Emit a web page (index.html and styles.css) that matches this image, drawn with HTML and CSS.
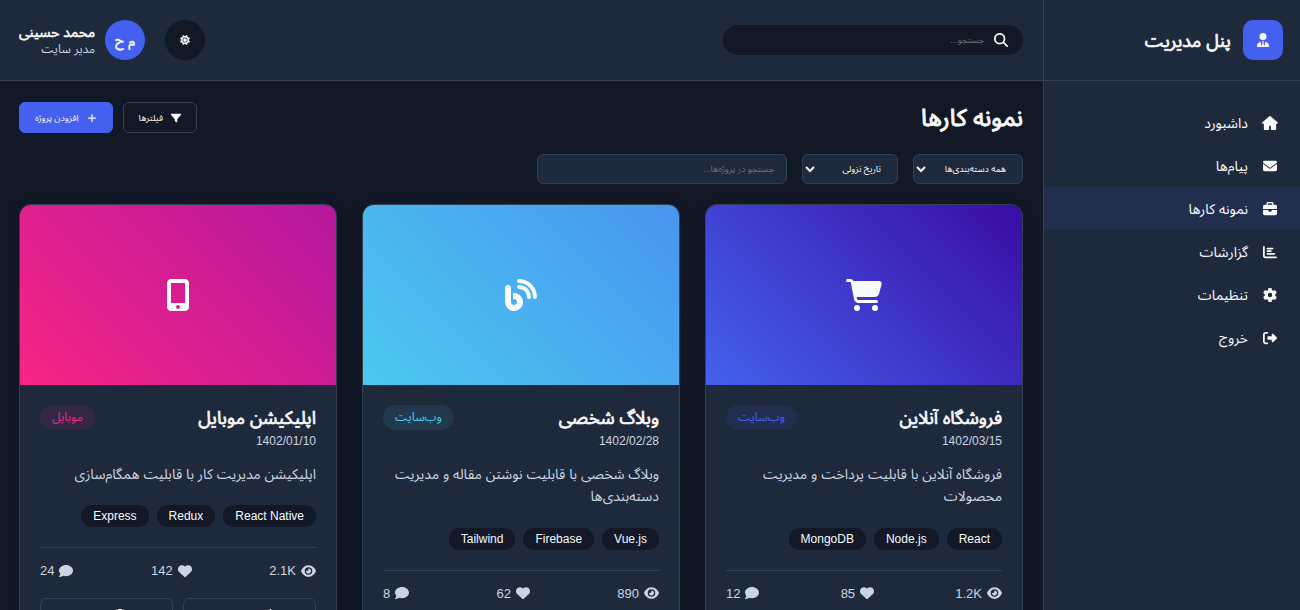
FILE: index.html
```
<!DOCTYPE html>
<html lang="fa" dir="rtl">
<head>
<meta charset="UTF-8">
<meta name="viewport" content="width=device-width, initial-scale=1">
<title>پنل مدیریت</title>
<link rel="stylesheet" href="styles.css">
</head>
<body>
<svg class="sprite" aria-hidden="true">
  <symbol id="i-tie" viewBox="0 0 448 512"><path d="M96 128a128 128 0 1 0 256 0A128 128 0 1 0 96 128zm94.500 200.200l18.600 31L175.800 483.100l-36-146.900c-2-8.100-9.800-13.400-17.900-11.300C51.900 342.400 0 405.800 0 481.300c0 17 13.800 30.700 30.700 30.700H417.300c17 0 30.700-13.800 30.700-30.700c0-75.500-51.900-138.900-121.900-156.400c-8.100-2-15.900 3.300-17.900 11.300l-36 146.900L238.900 359.200l18.600-31c6.400-10.700-1.300-24.200-13.700-24.200H204.300c-12.400 0-20.100 13.600-13.700 24.200z"/></symbol>
  <symbol id="i-home" viewBox="0 0 576 512"><path d="M575.800 255.500c0 18-15 32.100-32 32.100h-32l.7 160.200c0 2.700-.2 5.400-.5 8.100V472c0 22.100-17.900 40-40 40H360c-22.100 0-40-17.900-40-40V376c0-17.700-14.300-32-32-32s-32 14.300-32 32v96c0 22.100-17.900 40-40 40H104c-22.100 0-40-17.900-40-40V287.600H32c-18 0-32-14-32-32.100c0-9 3-17 10-24L266.400 8c7-7 15-8 22-8s15 2 21 7L564.800 231.500c8 7 12 15 11 24z"/></symbol>
  <symbol id="i-mail" viewBox="0 0 512 512"><path d="M48 64C21.500 64 0 85.500 0 112c0 15.100 7.100 29.300 19.200 38.400L236.800 313.600c11.400 8.500 27 8.500 38.400 0L492.800 150.400c12.100-9.100 19.200-23.300 19.200-38.400c0-26.500-21.500-48-48-48H48zM0 176V384c0 35.300 28.700 64 64 64H448c35.300 0 64-28.700 64-64V176L294.400 339.200c-22.800 17.100-54 17.100-76.800 0L0 176z"/></symbol>
  <symbol id="i-case" viewBox="0 0 512 512"><path d="M184 48H328c4.400 0 8 3.600 8 8V96H176V56c0-4.400 3.600-8 8-8zm-56 8V96H64C28.700 96 0 124.700 0 160v96H192 320 512V160c0-35.300-28.700-64-64-64H384V56c0-30.900-25.100-56-56-56H184c-30.900 0-56 25.100-56 56zM512 288H320v32c0 17.700-14.300 32-32 32H224c-17.700 0-32-14.300-32-32V288H0V416c0 35.300 28.700 64 64 64H448c35.300 0 64-28.700 64-64V288z"/></symbol>
  <symbol id="i-chart" viewBox="0 0 512 512"><path d="M32 32c17.700 0 32 14.300 32 32V400c0 8.800 7.200 16 16 16H480c17.700 0 32 14.300 32 32s-14.300 32-32 32H80c-44.200 0-80-35.800-80-80V64C0 46.300 14.300 32 32 32zm96 96c0-17.700 14.300-32 32-32l192 0c17.700 0 32 14.300 32 32s-14.300 32-32 32l-192 0c-17.700 0-32-14.300-32-32zm32 64H288c17.700 0 32 14.300 32 32s-14.300 32-32 32H160c-17.700 0-32-14.300-32-32s14.300-32 32-32zm0 96H416c17.700 0 32 14.300 32 32s-14.300 32-32 32H160c-17.700 0-32-14.300-32-32s14.300-32 32-32z"/></symbol>
  <symbol id="i-gear" viewBox="0 0 512 512"><path d="M495.900 166.600c3.200 8.700 .5 18.400-6.400 24.600l-43.300 39.400c1.100 8.300 1.700 16.800 1.700 25.400s-.6 17.100-1.700 25.400l43.300 39.400c6.900 6.200 9.600 15.900 6.400 24.600c-4.400 11.900-9.700 23.300-15.800 34.300l-4.700 8.100c-6.600 11-14 21.400-22.100 31.200c-5.900 7.200-15.700 9.600-24.500 6.800l-55.700-17.700c-13.400 10.300-28.200 18.900-44 25.400l-12.500 57.100c-2 9.100-9 16.300-18.200 17.800c-13.800 2.300-28 3.500-42.500 3.500s-28.700-1.200-42.500-3.500c-9.200-1.500-16.200-8.700-18.200-17.800l-12.500-57.100c-15.800-6.500-30.600-15.100-44-25.400L83.100 425.900c-8.800 2.800-18.600 .3-24.500-6.800c-8.100-9.800-15.500-20.200-22.100-31.200l-4.700-8.100c-6.100-11-11.400-22.400-15.800-34.300c-3.200-8.700-.5-18.400 6.400-24.600l43.300-39.400C64.600 273.100 64 264.600 64 256s.6-17.100 1.700-25.400L22.400 191.200c-6.900-6.200-9.600-15.900-6.400-24.600c4.400-11.900 9.700-23.300 15.800-34.300l4.700-8.100c6.600-11 14-21.400 22.100-31.200c5.900-7.200 15.700-9.600 24.500-6.800l55.700 17.700c13.400-10.300 28.200-18.900 44-25.400l12.500-57.100c2-9.100 9-16.300 18.200-17.800C227.300 1.200 241.500 0 256 0s28.700 1.200 42.500 3.500c9.200 1.500 16.200 8.700 18.200 17.800l12.500 57.100c15.800 6.500 30.600 15.100 44 25.400l55.700-17.700c8.800-2.800 18.600-.3 24.500 6.800c8.100 9.800 15.500 20.200 22.100 31.200l4.700 8.100c6.100 11 11.400 22.400 15.800 34.300zM256 336a80 80 0 1 0 0-160 80 80 0 1 0 0 160z"/></symbol>
  <symbol id="i-exit" viewBox="0 0 512 512"><path d="M377.900 105.900L500.700 228.700c7.200 7.200 11.300 17.100 11.300 27.300s-4.100 20.100-11.300 27.300L377.900 406.100c-6.400 6.400-15 9.900-24 9.900c-18.700 0-33.900-15.200-33.900-33.900l0-62.100-128 0c-17.700 0-32-14.300-32-32l0-64c0-17.700 14.300-32 32-32l128 0 0-62.100c0-18.700 15.200-33.900 33.900-33.900c9 0 17.600 3.600 24 9.900zM160 96L96 96c-17.700 0-32 14.300-32 32l0 256c0 17.700 14.300 32 32 32l64 0c17.700 0 32 14.300 32 32s-14.300 32-32 32l-64 0c-53 0-96-43-96-96L0 128C0 75 43 32 96 32l64 0c17.700 0 32 14.300 32 32s-14.300 32-32 32z"/></symbol>
  <symbol id="i-search" viewBox="0 0 512 512"><path d="M416 208c0 45.900-14.900 88.300-40 122.700L502.600 457.400c12.500 12.500 12.500 32.800 0 45.300s-32.800 12.500-45.300 0L330.700 376c-34.400 25.200-76.800 40-122.700 40C93.100 416 0 322.900 0 208S93.100 0 208 0S416 93.100 416 208zM208 352a144 144 0 1 0 0-288 144 144 0 1 0 0 288z"/></symbol>
  <symbol id="i-sun" viewBox="0 0 512 512"><path d="M361.500 1.200c5 2.100 8.600 6.600 9.600 11.900L391 121l107.900 19.800c5.300 1 9.800 4.600 11.900 9.600s1.500 10.700-1.600 15.200L446.900 256l62.300 90.300c3.100 4.500 3.700 10.200 1.600 15.200s-6.600 8.600-11.900 9.600L391 391 371.100 498.900c-1 5.300-4.600 9.800-9.600 11.900s-10.700 1.500-15.200-1.600L256 446.900l-90.300 62.300c-4.500 3.100-10.200 3.700-15.200 1.600s-8.600-6.600-9.600-11.900L121 391 13.100 371.100c-5.300-1-9.800-4.600-11.900-9.600s-1.500-10.700 1.600-15.200L65.100 256 2.800 165.700c-3.100-4.500-3.700-10.200-1.600-15.200s6.600-8.600 11.900-9.600L121 121 140.900 13.100c1-5.300 4.600-9.800 9.600-11.900s10.700-1.500 15.200 1.600L256 65.100 346.300 2.800c4.500-3.100 10.200-3.700 15.200-1.600zM160 256a96 96 0 1 1 192 0 96 96 0 1 1 -192 0zm224 0a128 128 0 1 0 -256 0 128 128 0 1 0 256 0z"/></symbol>
  <symbol id="i-filter" viewBox="0 0 512 512"><path d="M3.900 54.900C10.500 40.900 24.500 32 40 32H472c15.500 0 29.500 8.900 36.100 22.900s4.600 30.500-5.200 42.500L320 320.900V448c0 12.100-6.800 23.200-17.700 28.600s-23.800 4.300-33.500-3l-64-48c-8.100-6-12.800-15.500-12.800-25.600V320.900L9 97.300C-.7 85.400-2.800 68.800 3.900 54.900z"/></symbol>
  <symbol id="i-plus" viewBox="0 0 448 512"><path d="M256 80c0-17.700-14.300-32-32-32s-32 14.300-32 32V224H48c-17.700 0-32 14.300-32 32s14.300 32 32 32H192V432c0 17.700 14.300 32 32 32s32-14.300 32-32V288H400c17.700 0 32-14.300 32-32s-14.300-32-32-32H256V80z"/></symbol>
  <symbol id="i-cart" viewBox="0 0 576 512"><path d="M0 24C0 10.700 10.700 0 24 0H69.500c22 0 41.500 12.800 50.600 32h411c26.300 0 45.500 25 38.600 50.400l-41 152.300c-8.500 31.400-37 53.300-69.500 53.300H170.700l5.400 28.500c2.200 11.300 12.100 19.500 23.600 19.500H488c13.300 0 24 10.700 24 24s-10.700 24-24 24H199.700c-34.600 0-64.300-24.600-70.700-58.500L77.400 54.500c-.7-3.800-4-6.500-7.900-6.500H24C10.700 48 0 37.300 0 24zM128 464a48 48 0 1 1 96 0 48 48 0 1 1 -96 0zm336-48a48 48 0 1 1 0 96 48 48 0 1 1 0-96z"/></symbol>
  <symbol id="i-blog" viewBox="0 0 512 512"><path d="M192 32c0 17.700 14.300 32 32 32c123.700 0 224 100.300 224 224c0 17.700 14.300 32 32 32s32-14.300 32-32C512 128.900 383.100 0 224 0c-17.700 0-32 14.300-32 32zm0 96c0 17.700 14.300 32 32 32c70.700 0 128 57.300 128 128c0 17.700 14.300 32 32 32s32-14.300 32-32c0-106-86-192-192-192c-17.700 0-32 14.300-32 32zM96 144c0-26.500-21.500-48-48-48S0 117.500 0 144V368c0 79.500 64.500 144 144 144s144-64.500 144-144s-64.500-144-144-144H128v96h16c26.500 0 48 21.500 48 48s-21.500 48-48 48s-48-21.500-48-48V144z"/></symbol>
  <symbol id="i-mobile" viewBox="0 0 384 512"><path d="M16 64C16 28.700 44.700 0 80 0H304c35.300 0 64 28.700 64 64V448c0 35.300-28.700 64-64 64H80c-35.300 0-64-28.700-64-64V64zM224 448a32 32 0 1 0 -64 0 32 32 0 1 0 64 0zM304 64H80V384H304V64z"/></symbol>
  <symbol id="i-eye" viewBox="0 0 576 512"><path d="M288 32c-80.800 0-145.500 36.800-192.600 80.600C48.600 156 17.300 208 2.500 243.700c-3.300 7.900-3.300 16.700 0 24.600C17.300 304 48.600 356 95.400 399.400C142.500 443.200 207.200 480 288 480s145.500-36.800 192.600-80.600c46.800-43.500 78.100-95.400 93-131.100c3.300-7.900 3.300-16.700 0-24.600c-14.900-35.700-46.200-87.700-93-131.100C433.500 68.800 368.800 32 288 32zM144 256a144 144 0 1 1 288 0 144 144 0 1 1 -288 0zm144-64c0 35.300-28.700 64-64 64c-7.100 0-13.900-1.200-20.300-3.300c-5.500-1.800-11.900 1.600-11.700 7.400c.3 6.900 1.300 13.800 3.200 20.700c13.700 51.200 66.400 81.600 117.600 67.900s81.600-66.400 67.900-117.600c-11.100-41.500-47.800-69.400-88.600-71.100c-5.800-.2-9.200 6.100-7.400 11.700c2.100 6.400 3.300 13.200 3.300 20.300z"/></symbol>
  <symbol id="i-heart" viewBox="0 0 512 512"><path d="M47.600 300.400L228.300 469.100c7.500 7 17.400 10.900 27.700 10.900s20.200-3.900 27.700-10.900L464.400 300.400c30.400-28.300 47.600-68 47.600-109.500v-5.800c0-69.900-50.500-129.500-119.400-141C347 36.500 300.600 51.400 268 84L256 96 244 84c-32.600-32.600-79-47.500-124.600-39.900C50.500 55.600 0 115.200 0 185.100v5.800c0 41.500 17.200 81.200 47.600 109.500z"/></symbol>
  <symbol id="i-comment" viewBox="0 0 512 512"><path d="M512 240c0 114.900-114.600 208-256 208c-37.100 0-72.300-6.400-104.100-17.900c-11.900 8.700-31.300 20.600-54.300 30.600C73.600 471.100 44.700 480 16 480c-6.500 0-12.300-3.900-14.800-9.900c-2.500-6-1.100-12.800 3.400-17.400l.3-.3c.3-.3 .7-.7 1.300-1.400c1.100-1.200 2.800-3.100 4.900-5.700c4.100-5 9.600-12.400 15.200-21.600c10-16.600 19.500-38.400 21.400-62.900C17.700 326.800 0 285.100 0 240C0 125.100 114.600 32 256 32s256 93.100 256 208z"/></symbol>
  <symbol id="i-edit" viewBox="0 0 512 512"><path d="M471.600 21.700c-21.900-21.900-57.300-21.900-79.200 0L362.300 51.700l97.900 97.900 30.100-30.100c21.900-21.900 21.900-57.300 0-79.200L471.600 21.700zm-299.200 220c-6.100 6.100-10.800 13.600-13.500 21.900l-29.600 88.800c-2.900 8.600-.6 18.100 5.800 24.600s15.900 8.700 24.600 5.800l88.800-29.600c8.200-2.700 15.700-7.400 21.900-13.500L437.700 172.300 339.700 74.300 172.400 241.700zM96 64C43 64 0 107 0 160V416c0 53 43 96 96 96H352c53 0 96-43 96-96V320c0-17.700-14.300-32-32-32s-32 14.300-32 32v96c0 17.700-14.300 32-32 32H96c-17.700 0-32-14.300-32-32V160c0-17.700 14.300-32 32-32h96c17.700 0 32-14.300 32-32s-14.300-32-32-32H96z"/></symbol>
  <symbol id="i-trash" viewBox="0 0 448 512"><path d="M135.200 17.700L128 32H32C14.300 32 0 46.300 0 64S14.300 96 32 96H416c17.700 0 32-14.300 32-32s-14.300-32-32-32H320l-7.200-14.300C307.400 6.800 296.300 0 284.200 0H163.800c-12.100 0-23.200 6.800-28.600 17.700zM416 128H32L53.200 467c1.600 25.300 22.600 45 47.900 45H346.900c25.300 0 46.300-19.700 47.900-45L416 128z"/></symbol>
</svg>

<div class="app">
  <aside class="sidebar">
    <div class="brand">
      <span class="brand-logo"><svg class="icon icon-brand"><use href="#i-tie"/></svg></span>
      <span class="brand-name strong">پنل مدیریت</span>
    </div>
    <nav class="menu">
      <a class="menu-item" href="#"><svg class="icon icon-menu"><use href="#i-home"/></svg>داشبورد</a>
      <a class="menu-item" href="#"><svg class="icon icon-menu"><use href="#i-mail"/></svg>پیام‌ها</a>
      <a class="menu-item active" href="#" aria-current="page"><svg class="icon icon-menu"><use href="#i-case"/></svg>نمونه کارها</a>
      <a class="menu-item" href="#"><svg class="icon icon-menu"><use href="#i-chart"/></svg>گزارشات</a>
      <a class="menu-item" href="#"><svg class="icon icon-menu"><use href="#i-gear"/></svg>تنظیمات</a>
      <a class="menu-item" href="#"><svg class="icon icon-menu"><use href="#i-exit"/></svg>خروج</a>
    </nav>
  </aside>

  <div class="main">
    <header class="topbar">
      <label class="search">
        <svg class="icon icon-search"><use href="#i-search"/></svg>
        <input class="search-input" type="text" placeholder="جستجو..." aria-label="جستجو">
      </label>
      <div class="account">
        <button class="theme" type="button" aria-label="تغییر پوسته"><svg class="icon icon-theme"><use href="#i-sun"/></svg></button>
        <div class="user">
          <span class="avatar strong">م ح</span>
          <div class="user-info">
            <span class="user-name strong">محمد حسینی</span>
            <span class="user-role">مدیر سایت</span>
          </div>
        </div>
      </div>
    </header>

    <main class="content">
      <div class="page-head">
        <h1 class="page-title strong">نمونه کارها</h1>
        <div class="page-actions">
          <button class="btn" type="button"><svg class="icon icon-btn"><use href="#i-filter"/></svg>فیلترها</button>
          <button class="btn btn-primary" type="button"><svg class="icon icon-btn"><use href="#i-plus"/></svg>افزودن پروژه</button>
        </div>
      </div>

      <div class="filters">
        <select class="field" aria-label="دسته‌بندی"><option>همه دسته‌بندی‌ها</option><option>وب‌سایت</option><option>موبایل</option></select>
        <select class="field" aria-label="مرتب‌سازی"><option>تاریخ نزولی</option><option>تاریخ صعودی</option></select>
        <input class="field field-search" type="text" placeholder="جستجو در پروژه‌ها..." aria-label="جستجو در پروژه‌ها">
      </div>

      <div class="cards">
        <article class="card">
          <div class="cover cover-indigo"><svg class="icon icon-cover"><use href="#i-cart"/></svg></div>
          <div class="card-body">
            <div class="card-head">
              <div>
                <h2 class="card-title strong">فروشگاه آنلاین</h2>
                <div class="card-date">1402/03/15</div>
              </div>
              <span class="badge badge-indigo">وب‌سایت</span>
            </div>
            <p class="card-text">فروشگاه آنلاین با قابلیت پرداخت و مدیریت محصولات</p>
            <div class="tags"><span class="tag">React</span><span class="tag">Node.js</span><span class="tag">MongoDB</span></div>
            <div class="stats">
              <span class="stat"><svg class="icon icon-stat icon-eye"><use href="#i-eye"/></svg>1.2K</span>
              <span class="stat"><svg class="icon icon-stat"><use href="#i-heart"/></svg>85</span>
              <span class="stat"><svg class="icon icon-stat"><use href="#i-comment"/></svg>12</span>
            </div>
            <div class="card-actions">
              <button class="btn btn-card" type="button"><svg class="icon icon-btn"><use href="#i-edit"/></svg>ویرایش</button>
              <button class="btn btn-card" type="button"><svg class="icon icon-btn"><use href="#i-trash"/></svg>حذف</button>
            </div>
          </div>
        </article>

        <article class="card">
          <div class="cover cover-sky"><svg class="icon icon-cover"><use href="#i-blog"/></svg></div>
          <div class="card-body">
            <div class="card-head">
              <div>
                <h2 class="card-title strong">وبلاگ شخصی</h2>
                <div class="card-date">1402/02/28</div>
              </div>
              <span class="badge badge-sky">وب‌سایت</span>
            </div>
            <p class="card-text">وبلاگ شخصی با قابلیت نوشتن مقاله و مدیریت دسته‌بندی‌ها</p>
            <div class="tags"><span class="tag">Vue.js</span><span class="tag">Firebase</span><span class="tag">Tailwind</span></div>
            <div class="stats">
              <span class="stat"><svg class="icon icon-stat icon-eye"><use href="#i-eye"/></svg>890</span>
              <span class="stat"><svg class="icon icon-stat"><use href="#i-heart"/></svg>62</span>
              <span class="stat"><svg class="icon icon-stat"><use href="#i-comment"/></svg>8</span>
            </div>
            <div class="card-actions">
              <button class="btn btn-card" type="button"><svg class="icon icon-btn"><use href="#i-edit"/></svg>ویرایش</button>
              <button class="btn btn-card" type="button"><svg class="icon icon-btn"><use href="#i-trash"/></svg>حذف</button>
            </div>
          </div>
        </article>

        <article class="card">
          <div class="cover cover-pink"><svg class="icon icon-cover"><use href="#i-mobile"/></svg></div>
          <div class="card-body">
            <div class="card-head">
              <div>
                <h2 class="card-title strong">اپلیکیشن موبایل</h2>
                <div class="card-date">1402/01/10</div>
              </div>
              <span class="badge badge-pink">موبایل</span>
            </div>
            <p class="card-text">اپلیکیشن مدیریت کار با قابلیت همگام‌سازی</p>
            <div class="tags"><span class="tag">React Native</span><span class="tag">Redux</span><span class="tag">Express</span></div>
            <div class="stats">
              <span class="stat"><svg class="icon icon-stat icon-eye"><use href="#i-eye"/></svg>2.1K</span>
              <span class="stat"><svg class="icon icon-stat"><use href="#i-heart"/></svg>142</span>
              <span class="stat"><svg class="icon icon-stat"><use href="#i-comment"/></svg>24</span>
            </div>
            <div class="card-actions">
              <button class="btn btn-card" type="button"><svg class="icon icon-btn"><use href="#i-edit"/></svg>ویرایش</button>
              <button class="btn btn-card" type="button"><svg class="icon icon-btn"><use href="#i-trash"/></svg>حذف</button>
            </div>
          </div>
        </article>
      </div>
    </main>
  </div>
</div>
</body>
</html>
```
FILE: styles.css
```
:root {
  --bg: #121826;
  --panel: #1e293b;
  --line: #334155;
  --text: #f8fafc;
  --muted: #cbd5e1;
  --primary: #4361ee;
  --sky: #4cc9f0;
  --pink: #f72585;
}

* { box-sizing: border-box; margin: 0; padding: 0; }

body {
  background: var(--bg);
  color: var(--text);
  font-family: "Liberation Sans", "Noto Sans Arabic UI", "Noto Sans Arabic", sans-serif;
  font-size: 16px;
}

button, input, select { font-family: inherit; font-size: 9px; color: inherit; }

.sprite { display: none; }
.icon { display: block; flex: none; fill: currentColor; }

/* Emphasis drawn as a thin outline on the regular weight */
.strong { font-weight: 400; -webkit-text-stroke: 0.04em currentColor; }

.app { display: flex; height: 100vh; overflow: hidden; }

/* Sidebar */
.sidebar {
  flex: none;
  width: 257px;
  background: var(--panel);
  border-left: 1px solid var(--line);
}
.brand {
  display: flex;
  align-items: center;
  gap: 12px;
  height: 81px;
  padding: 0 17px;
  border-bottom: 1px solid var(--line);
}
.brand-logo {
  display: grid;
  place-items: center;
  width: 40px;
  height: 40px;
  border-radius: 10px;
  background: var(--primary);
}
.icon-brand { width: 14px; height: 14px; }
.brand-name { font-size: 18px; }
.menu { padding: 20px 0; }
.menu-item {
  display: flex;
  align-items: center;
  gap: 12px;
  height: 43px;
  padding: 0 20px;
  color: var(--text);
  font-size: 14px;
  text-decoration: none;
}
.menu-item.active { background: rgba(67, 97, 238, 0.1); }
.icon-menu { width: 20px; height: 14px; }

/* Top bar */
.main { display: flex; flex: 1; flex-direction: column; min-width: 0; }
.topbar {
  display: flex;
  flex: none;
  align-items: center;
  justify-content: space-between;
  height: 81px;
  padding: 0 20px 0 19px;
  background: var(--panel);
  border-bottom: 1px solid var(--line);
}
.search {
  display: flex;
  align-items: center;
  gap: 10px;
  width: 300px;
  height: 30px;
  padding: 0 15px;
  border-radius: 15px;
  background: var(--bg);
}
.icon-search { width: 14px; height: 14px; }
.search-input { flex: 1; min-width: 0; border: 0; outline: 0; background: none; }
.account { display: flex; align-items: center; gap: 20px; }
.theme {
  display: grid;
  place-items: center;
  width: 40px;
  height: 40px;
  border: 0;
  border-radius: 50%;
  background: var(--bg);
}
.icon-theme { width: 10px; height: 10px; }
.user { display: flex; align-items: center; gap: 10px; }
.avatar {
  display: grid;
  place-items: center;
  width: 40px;
  height: 40px;
  border-radius: 50%;
  background: var(--primary);
  font-size: 14px;
}
.user-info { display: flex; flex-direction: column; }
.user-name { font-size: 14px; line-height: 18px; }
.user-role { font-size: 12px; line-height: 17px; color: var(--muted); }

/* Page */
.content { flex: 1; padding: 20px 20px 20px 19px; overflow-y: auto; scrollbar-width: none; }
.page-head { display: flex; align-items: center; justify-content: space-between; height: 33px; margin-bottom: 20px; }
.page-title { font-size: 24px; line-height: 33px; }
.page-actions { display: flex; gap: 10px; }
.btn {
  display: flex;
  align-items: center;
  justify-content: center;
  gap: 8px;
  height: 31px;
  padding: 0 15px;
  border: 1px solid var(--line);
  border-radius: 6px;
  background: none;
}
.btn-primary { border-color: var(--primary); background: var(--primary); }
.icon-btn { width: 10px; height: 10px; }

.filters { display: flex; gap: 15px; margin-bottom: 20px; }
.field {
  height: 30px;
  padding: 0 12px 0 14px;
  border: 1px solid var(--line);
  border-radius: 6px;
  background: var(--panel);
}
.field-search { width: 250px; }

.cards {
  display: grid;
  grid-template-columns: repeat(auto-fill, minmax(300px, 1fr));
  align-items: start;
  gap: 25px;
}
.card {
  overflow: hidden;
  border: 1px solid var(--line);
  border-radius: 12px;
  background: var(--panel);
  box-shadow: 0 4px 12px rgba(0, 0, 0, 0.15);
}
.cover { display: grid; place-items: center; height: 180px; }
.cover-indigo { background: linear-gradient(45deg, #4361ee, #3a0ca3); }
.cover-sky { background: linear-gradient(45deg, #4cc9f0, #4895ef); }
.cover-pink { background: linear-gradient(45deg, #f72585, #b5179e); }
.icon-cover { width: 36px; height: 32px; }

.card-body { padding: 20px; }
.card-head { display: flex; align-items: flex-start; justify-content: space-between; margin-bottom: 14px; }
.card-title { margin-bottom: 2px; font-size: 18px; line-height: 26px; }
.card-date { font-size: 12px; line-height: 16px; color: var(--muted); }
.badge { height: 25px; padding: 0 12px; border-radius: 13px; font-size: 12px; line-height: 25px; }
.badge-indigo { background: rgba(67, 97, 238, 0.1); color: var(--primary); }
.badge-sky { background: rgba(76, 201, 240, 0.1); color: var(--sky); }
.badge-pink { background: rgba(247, 37, 133, 0.1); color: var(--pink); }
.card-text { margin-bottom: 20px; font-size: 14px; line-height: 1.6; color: var(--muted); }
.tags { display: flex; flex-wrap: wrap; gap: 8px; margin-bottom: 20px; }
.tag { padding: 0 12px; border-radius: 11px; background: var(--bg); font-size: 12px; line-height: 22px; }
.stats {
  display: flex;
  justify-content: space-between;
  padding-top: 15px;
  border-top: 1px solid var(--line);
  color: var(--muted);
  font-size: 13px;
  line-height: 15px;
}
.stat { display: flex; align-items: center; gap: 5px; }
.icon-stat { width: 14px; height: 14px; }
.icon-eye { width: 15px; }
.card-actions { display: flex; gap: 10px; margin-top: 20px; }
.btn-card { flex: 1; }
```
